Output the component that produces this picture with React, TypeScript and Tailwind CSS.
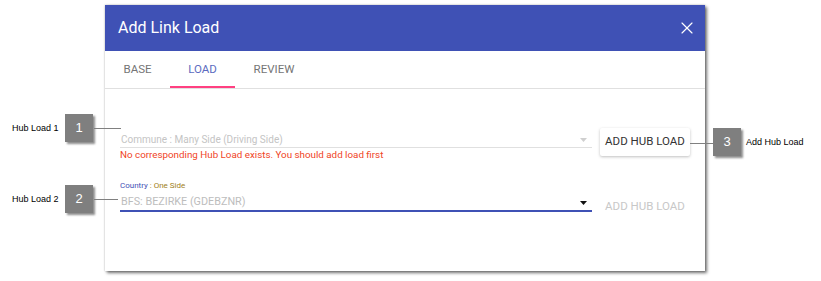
import { X } from "lucide-react";

const FONT = { fontFamily: "Roboto, 'Liberation Sans', sans-serif" };
const CALLOUT_FONT = { fontFamily: "'Liberation Sans', Arial, sans-serif" };

function Caret({ color }: { color: string }) {
  return (
    <svg width="7" height="4" viewBox="0 0 7 4" className="shrink-0">
      <path d="M0 0 L7 0 L3.5 4 Z" fill={color} />
    </svg>
  );
}

function Callout({ n, className }: { n: string; className: string }) {
  return (
    <div
      className={`absolute flex h-[28px] w-[28px] items-center justify-center bg-[#7f7f7f] text-[13px] text-white shadow-[2px_2px_2px_rgba(0,0,0,0.45)] ${className}`}
      style={CALLOUT_FONT}
    >
      {n}
    </div>
  );
}

export default function App() {
  return (
    <div className="relative h-[281px] w-[821px] overflow-hidden bg-white">
      {/* dialog */}
      <div
        className="ml-[105px] mt-[5px] flex h-[266px] w-[600px] flex-col bg-white shadow-[2px_2px_3px_rgba(0,0,0,0.55),0_0_2px_rgba(0,0,0,0.25)]"
        style={FONT}
      >
        <header className="flex h-[46px] items-center justify-between bg-[#3f51b5] pl-[13px] pr-[8px]">
          <h1 className="text-[16px] text-white">Add Link Load</h1>
          <X size={20} strokeWidth={1.4} className="text-white" />
        </header>

        <nav className="flex h-[38px] border-b border-[#e0e0e0] text-[11.5px]">
          <div className="flex w-[65px] items-center justify-center text-[#757575]">BASE</div>
          <div className="flex w-[65px] items-center justify-center border-b-2 border-[#ff4081] pt-[2px] text-[#5c6bc0]">
            LOAD
          </div>
          <div className="flex w-[78px] items-center justify-center text-[#757575]">REVIEW</div>
        </nav>

        <div className="flex flex-col gap-[18px] pl-[15px] pr-[15px] pt-[39px]">
          <div className="flex items-start gap-[8px]">
            <div className="mt-[2px] flex-1">
              <div className="flex h-[18px] items-center border-b border-[#e0e0e0] pl-[1px] pr-[5px] pt-[2px]">
                <span className="flex-1 text-[10px] text-[#c4c4c4]">Commune : Many Side (Driving Side)</span>
                <Caret color="#cfcfcf" />
              </div>
              <p className="text-[9.8px] leading-[14px] text-[#f0441f]">
                No corresponding Hub Load exists. You should add load first
              </p>
            </div>
            <button className="h-[28px] w-[90px] rounded-[2px] bg-white text-[11.5px] text-[#333] shadow-[0_1px_3px_rgba(0,0,0,0.25)]">
              ADD HUB LOAD
            </button>
          </div>

          <div className="flex items-start gap-[8px]">
            <div className="flex-1">
              <p className="h-[10px] pt-[1px] text-[8px] leading-[10px]">
                <span className="text-[#3f51b5]">Country</span>
                <span className="text-[#a08020]"> : One Side</span>
              </p>
              <div className="flex h-[22px] items-end border-b-2 border-[#3f51b5] pb-[1px] pl-[1px] pr-[5px]">
                <span className="flex-1 text-[10.8px] leading-[14px] text-[#bdbdbd]">BFS: BEZIRKE (GDEBZNR)</span>
                <span className="mb-[4px]">
                  <Caret color="#111" />
                </span>
              </div>
            </div>
            <button className="mt-[13px] h-[28px] w-[90px] text-[11.5px] text-[#c8c8c8]">ADD HUB LOAD</button>
          </div>
        </div>
      </div>

      {/* annotation callouts */}
      <span className="absolute left-[12px] top-[122px] text-[9px] leading-[12px] text-black" style={CALLOUT_FONT}>
        Hub Load 1
      </span>
      <Callout n="1" className="left-[65px] top-[114px]" />
      <div className="absolute left-[94px] top-[128px] h-px w-[27px] bg-[#808080]" />

      <span className="absolute left-[12px] top-[193px] text-[9px] leading-[12px] text-black" style={CALLOUT_FONT}>
        Hub Load 2
      </span>
      <Callout n="2" className="left-[65px] top-[185px]" />
      <div className="absolute left-[94px] top-[199px] h-px w-[24px] bg-[#808080]" />

      <div className="absolute left-[690px] top-[143px] h-px w-[23px] bg-[#808080]" />
      <Callout n="3" className="left-[713px] top-[128px] w-[27px]" />
      <span className="absolute left-[746px] top-[136px] text-[9px] leading-[12px] text-black" style={CALLOUT_FONT}>
        Add Hub Load
      </span>
    </div>
  );
}
